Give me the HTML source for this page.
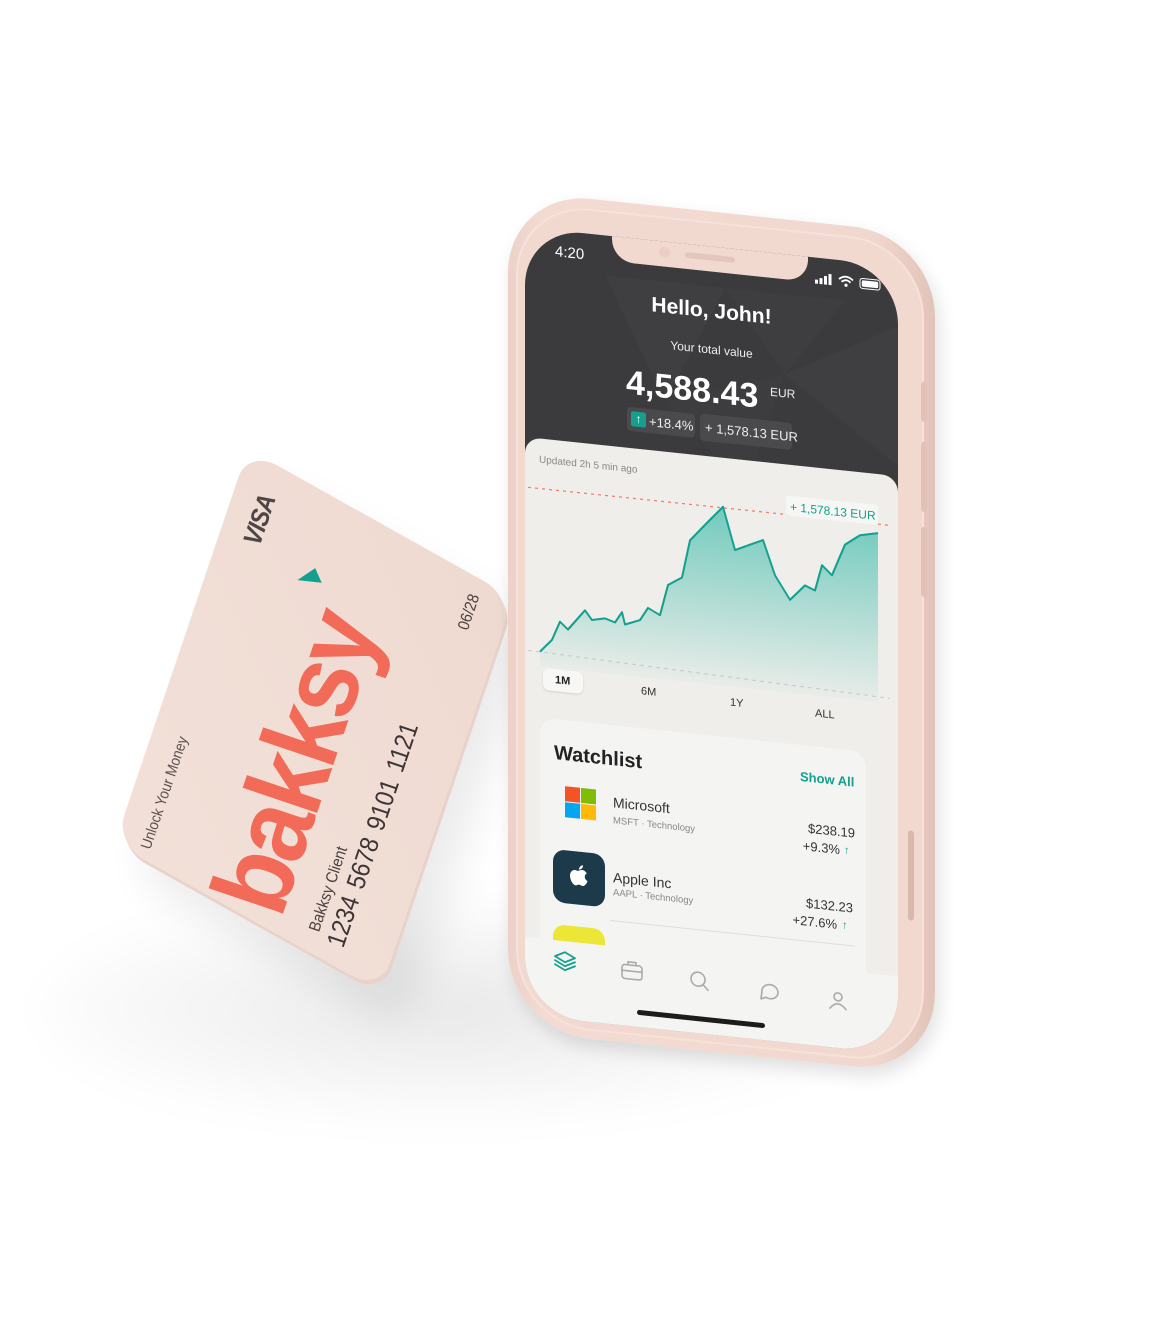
<!DOCTYPE html>
<html><head><meta charset="utf-8">
<style>
*{margin:0;padding:0;box-sizing:border-box}
html,body{width:1170px;height:1258px;background:#fff;overflow:hidden;font-family:"Liberation Sans",sans-serif}
.abs{position:absolute}
#shadow{position:absolute;left:40px;top:880px;width:900px;height:260px;border-radius:50%;background:radial-gradient(ellipse at 45% 50%,rgba(0,0,0,0.09),rgba(0,0,0,0) 65%);filter:blur(20px)}
#card{position:absolute;left:0;top:0;width:426px;height:276px;transform-origin:0 0;transform:matrix(0.3125,-0.925,0.9615,0.538,125,840) translate(-8px,-8px);}
#cardbody{position:absolute;left:0;top:0;width:426px;height:276px;border-radius:30px;background:linear-gradient(135deg,#f2e0d8,#efdad1);box-shadow:-3px 3px 0 #e8d2c9,-20px 30px 40px rgba(0,0,0,0.08)}
.ct{position:absolute;white-space:nowrap;line-height:1}
#card .ct{transform:skewX(11.7deg);transform-origin:0 100%}
#phone{position:absolute;left:0;top:0;width:1170px;height:1258px;transform-origin:525px 0;transform:skewY(6deg)}
</style></head><body>
<div id="shadow"></div>

<div id="card">
 <div id="cardbody"></div>
 <div style="position:absolute;left:8px;top:8px;width:410px;height:260px">
  <div class="ct" style="left:336px;top:12px;font-size:24px;font-weight:bold;font-style:italic;color:#4e4646;letter-spacing:-1px">VISA</div>
  <div class="ct" style="left:4px;top:13px;font-size:14px;color:#5c5050">Unlock Your Money</div>
  <div class="ct" style="left:10px;top:76px;font-size:100px;line-height:100px;font-weight:bold;color:#f26a58;letter-spacing:-4px">bakksy</div>
  <svg class="abs" style="left:322px;top:72px" width="26" height="26" viewBox="0 0 26 26"><polygon points="2,2 22,14 12,24" fill="#14a08e"/></svg>
  <div class="ct" style="left:15px;top:185px;font-size:15px;color:#4a4040">Bakksy Client</div>
  <div class="ct" style="left:13px;top:204px;font-size:24px;color:#3d3535;word-spacing:3px">1234 5678 9101 1121</div>
  <div class="ct" style="left:365px;top:226px;font-size:15px;color:#4a4040">06/28</div>
 </div>
</div>

<div id="phone">
 <div class="abs" style="left:508px;top:192px;width:427px;height:840px;border-radius:82px;background:linear-gradient(90deg,#ecd1c7 0%,#f3dbd2 8%,#f1d8cf 85%,#e2c3b8 100%);box-shadow:4px 8px 18px rgba(0,0,0,0.12)"></div>
 <div class="abs" style="left:516px;top:202px;width:408px;height:822px;border-radius:74px;background:#f2d9d0;border:2px solid #f6e2da"></div>
 <div class="abs" style="left:921px;top:340px;width:6px;height:40px;border-radius:3px;background:#e2c2b7"></div>
 <div class="abs" style="left:921px;top:400px;width:6px;height:70px;border-radius:3px;background:#e2c2b7"></div>
 <div class="abs" style="left:921px;top:485px;width:6px;height:70px;border-radius:3px;background:#e2c2b7"></div>
 <div class="abs" style="left:908px;top:790px;width:6px;height:90px;border-radius:3px;background:#d8b8ac"></div>
 <div class="abs" style="left:525px;top:227px;width:373px;height:788px;border-radius:58px;background:#3b3b3d;overflow:hidden">
  <svg class="abs" style="left:0;top:0" width="373" height="260"><polygon points="80,40 200,40 140,160" fill="#3f3f41"/><polygon points="200,40 320,40 260,120" fill="#3e3e40"/><polygon points="260,120 373,60 373,200" fill="#3f3f41"/><polygon points="140,160 260,120 220,240" fill="#3d3d3f"/></svg>
  <div class="abs" style="left:87px;top:-20px;width:196px;height:45px;background:#f2d9d0;border-radius:0 0 22px 22px"></div>
  <div class="abs" style="left:160px;top:8px;width:50px;height:6px;border-radius:3px;background:#e3c7bd"></div>
  <div class="abs" style="left:134px;top:5px;width:11px;height:11px;border-radius:50%;background:#ebcfc5"></div>
  <div class="ct" style="left:30px;top:14px;font-size:15px;color:#fff">4:20</div>
  <svg class="abs" style="left:290px;top:14px" width="70" height="14" viewBox="0 0 70 14">
   <rect x="0" y="8" width="3" height="4" fill="#fff"/><rect x="4.5" y="6" width="3" height="6" fill="#fff"/><rect x="9" y="3.5" width="3" height="8.5" fill="#fff"/><rect x="13.5" y="1" width="3" height="11" fill="#fff"/>
   <path d="M24 5 Q31 -1 38 5 M26.5 7.5 Q31 3.5 35.5 7.5" stroke="#fff" stroke-width="1.8" fill="none"/><circle cx="31" cy="10.5" r="1.6" fill="#fff"/>
   <rect x="45" y="2" width="20" height="10" rx="2.5" fill="none" stroke="#fff" stroke-width="1"/><rect x="46.8" y="3.8" width="16.4" height="6.4" rx="1.3" fill="#fff"/>
  </svg>
  <div class="ct" style="left:0;width:373px;text-align:center;top:54px;font-size:21px;font-weight:bold;color:#fff">Hello, John!</div>
  <div class="ct" style="left:0;width:373px;text-align:center;top:97px;font-size:12px;color:#eee">Your total value</div>
  <div class="ct" style="left:101px;top:128px;font-size:34px;font-weight:bold;color:#fff">4,588.43</div>
  <div class="ct" style="left:245px;top:133px;font-size:12px;color:#eee">EUR</div>
  <div class="abs" style="left:102px;top:169px;width:68px;height:24px;border-radius:4px;background:#4a4a4c"></div>
  <div class="abs" style="left:106px;top:173px;width:15px;height:15px;border-radius:2px;background:#13a08c;color:#fff;font-size:12px;line-height:15px;text-align:center;font-weight:bold">↑</div>
  <div class="ct" style="left:124px;top:175px;font-size:13px;color:#eee">+18.4%</div>
  <div class="abs" style="left:175px;top:168px;width:92px;height:27px;border-radius:4px;background:#4a4a4c"></div>
  <div class="ct" style="left:180px;top:175px;font-size:13px;color:#eee">+ 1,578.13 EUR</div>
  <div class="abs" style="left:0;top:210px;width:373px;height:600px;border-radius:16px 16px 0 0;background:#efeeeb"></div>
  <div class="ct" style="left:14px;top:227px;font-size:10px;color:#888">Updated 2h 5 min ago</div>
 </div>
 <svg class="abs" style="left:0;top:0" width="1170" height="1258" viewBox="0 0 1170 1258">
  <defs><linearGradient id="g" x1="0" y1="0" x2="0" y2="1"><stop offset="0" stop-color="#5cc4b5" stop-opacity="0.85"/><stop offset="1" stop-color="#5cc4b5" stop-opacity="0.04"/></linearGradient></defs>
  <line x1="528" y1="487" x2="892" y2="487" stroke="#f07a6c" stroke-width="1.2" stroke-dasharray="3,4"/>
  <polygon fill="url(#g)" points="540,650 552,637 560,618 568,625 585,604 592,613 605,610 615,613 622,602 625,614 640,608 648,595 660,601 668,570 682,561 690,523 705,506 723,486 735,528 750,521 763,515 775,549 790,572 805,556 815,560 822,534 832,543 845,511 860,500 878,496 878,665 540,665"/>
  <polyline fill="none" stroke="#14a08e" stroke-width="2" stroke-linejoin="round" points="540,650 552,637 560,618 568,625 585,604 592,613 605,610 615,613 622,602 625,614 640,608 648,595 660,601 668,570 682,561 690,523 705,506 723,486 735,528 750,521 763,515 775,549 790,572 805,556 815,560 822,534 832,543 845,511 860,500 878,496"/>
  <line x1="528" y1="650" x2="890" y2="660" stroke="#c9c9c6" stroke-width="1" stroke-dasharray="4,4"/>
  <rect x="786" y="468" width="92" height="20" rx="3" fill="#f6f6f4"/>
  <text x="790" y="483" font-family="Liberation Sans" font-size="12" fill="#14a08e">+ 1,578.13 EUR</text>
 </svg>
 <div class="abs" style="left:543px;top:666px;width:40px;height:22px;border-radius:6px;background:#f7f7f5;box-shadow:0 1px 2px rgba(0,0,0,0.12)"></div>
 <div class="ct" style="left:555px;top:672px;font-size:11px;font-weight:bold;color:#222">1M</div>
 <div class="ct" style="left:641px;top:674px;font-size:11px;color:#333">6M</div>
 <div class="ct" style="left:730px;top:676px;font-size:11px;color:#333">1Y</div>
 <div class="ct" style="left:815px;top:678px;font-size:11px;color:#333">ALL</div>
 <div class="abs" style="left:540px;top:716px;width:326px;height:240px;border-radius:16px;background:#f4f4f3"></div>
 <div class="ct" style="left:554px;top:740px;font-size:20px;font-weight:bold;color:#222">Watchlist</div>
 <div class="ct" style="left:800px;top:741px;font-size:13px;font-weight:bold;color:#14a08e">Show All</div>
 <div class="abs" style="left:565px;top:782px;width:15px;height:15px;background:#f35325"></div>
 <div class="abs" style="left:581px;top:782px;width:15px;height:15px;background:#81bc06"></div>
 <div class="abs" style="left:565px;top:798px;width:15px;height:15px;background:#05a6f0"></div>
 <div class="abs" style="left:581px;top:798px;width:15px;height:15px;background:#ffba08"></div>
 <div class="ct" style="left:613px;top:786px;font-size:14px;color:#333">Microsoft</div>
 <div class="ct" style="left:613px;top:807px;font-size:9.5px;color:#888">MSFT · Technology</div>
 <div class="ct" style="left:790px;top:792px;width:65px;text-align:right;font-size:13px;color:#333">$238.19</div>
 <div class="ct" style="left:775px;top:810px;width:65px;text-align:right;font-size:13px;color:#333">+9.3%</div>
 <div class="ct" style="left:844px;top:812px;font-size:11px;font-weight:bold;color:#14a08e">↑</div>
 <div class="abs" style="left:553px;top:846px;width:52px;height:53px;border-radius:12px;background:#1d3a4b"></div>
 <svg class="abs" style="left:568px;top:858px" width="22" height="26" viewBox="0 0 22 26"><path d="M11 7 C13 6 15 5.5 17 7 C18 8 18.5 8.5 18.8 9 C16 10.5 16 15 19.5 16.5 C18.5 19.5 16.5 22 14.5 22 C13 22 12.5 21 11 21 C9.5 21 9 22 7.5 22 C5 22 2 17 2 13 C2 9 4.5 6.8 7 6.8 C8.8 6.8 9.6 7.8 11 7 Z M11 6 C11 3.5 13 1.5 15 1.2 C15.2 3.8 13 6 11 6 Z" fill="#fff"/></svg>
 <div class="ct" style="left:613px;top:861px;font-size:14px;color:#333">Apple Inc</div>
 <div class="ct" style="left:613px;top:879px;font-size:9.5px;color:#888">AAPL · Technology</div>
 <div class="ct" style="left:788px;top:867px;width:65px;text-align:right;font-size:13px;color:#333">$132.23</div>
 <div class="ct" style="left:772px;top:885px;width:65px;text-align:right;font-size:13px;color:#333">+27.6%</div>
 <div class="ct" style="left:842px;top:887px;font-size:11px;font-weight:bold;color:#14a08e">↑</div>
 <div class="abs" style="left:610px;top:911px;width:245px;height:1px;background:#dedede"></div>
 <div class="abs" style="left:553px;top:921px;width:52px;height:30px;border-radius:12px 12px 0 0;background:#ece636"></div>
 <div class="abs" style="left:525px;top:937px;width:373px;height:78px;border-radius:0 0 58px 58px;background:#f4f4f3"></div>
 <svg class="abs" style="left:0;top:0" width="1170" height="1258" viewBox="0 0 1170 1258" fill="none" stroke-linecap="round" stroke-linejoin="round">
  <g stroke="#14a08e" stroke-width="1.8"><path d="M555 953 L565 948 L575 953 L565 958 Z"/><path d="M555 957 L565 962 L575 957"/><path d="M555 961 L565 966 L575 961"/></g>
  <g stroke="#aaa" stroke-width="1.6">
   <rect x="622" y="954" width="20" height="14" rx="3"/><path d="M628 954 V951 H636 V954 M622 960 H642"/>
   <circle cx="698" cy="961" r="7"/><path d="M703 966 L708 971"/>
   <path d="M762 966 A8 7 0 1 1 766 972 L761 974 Z"/>
   <circle cx="838" cy="964" r="4"/><path d="M830 976 Q838 966 846 976"/>
  </g>
  <rect x="637" y="998" width="128" height="5" rx="2.5" fill="#1c1c1c"/>
 </svg>
</div>
</body></html>
